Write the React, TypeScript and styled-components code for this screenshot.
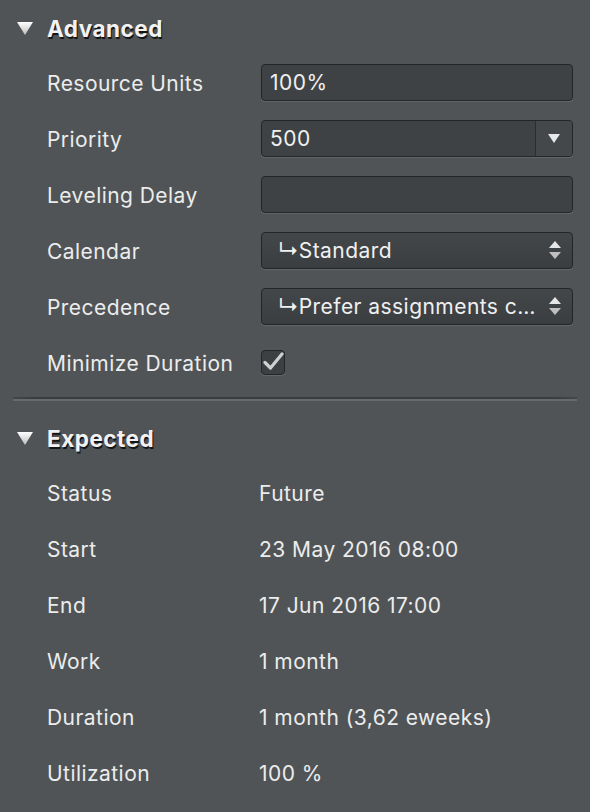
import React from "react";
import styled, { createGlobalStyle } from "styled-components";

const GlobalStyle = createGlobalStyle`
  html, body {
    margin: 0;
    padding: 0;
    background: #505456;
  }
  body {
    font-family: Inter, "Liberation Sans", sans-serif;
    color: #ececec;
  }
`;

const Panel = styled.div`
  width: 590px;
  min-height: 812px;
  background: #505456;
  padding-top: 2px;
  box-sizing: border-box;
`;

const SectionHeader = styled.div`
  height: 52px;
  display: flex;
  align-items: center;
  padding-left: 17px;
  gap: 14px;
`;

const Title = styled.span`
  font-size: 22.5px;
  font-weight: 700;
  color: #f2f2f2;
  text-shadow: 1px 2px 0 #141516;
  letter-spacing: 0.5px;
  margin-top: 1px;
`;

const Disclosure = () => (
  <svg width="16" height="13" viewBox="0 0 16 13">
    <defs>
      <linearGradient id="tri" x1="0" y1="0" x2="0" y2="1">
        <stop offset="0" stopColor="#ffffff" />
        <stop offset="1" stopColor="#bdbdbd" />
      </linearGradient>
    </defs>
    <polygon points="0,0 16,0 8,13" fill="url(#tri)" />
  </svg>
);

const Rows = styled.div`
  display: grid;
  grid-template-columns: 214px 312px;
  grid-auto-rows: 56px;
  padding-left: 47px;
  align-items: center;
`;

const BaseText = styled.div`
  font-size: 21px;
  letter-spacing: 0.45px;
  color: #ececec;
  padding-top: 3px;
`;

const Label = styled(BaseText)``;

const Value = styled(BaseText)`
  margin-left: -2px;
`;

const Field = styled.div`
  height: 37px;
  box-sizing: border-box;
  border: 1px solid #232527;
  border-radius: 4px;
  background: #3f4245;
  box-shadow: 0 1px 0 #62666a;
  display: flex;
  align-items: center;
  font-size: 21px;
  letter-spacing: 0.45px;
  color: #f0f0f0;
  overflow: hidden;
`;

const FieldText = styled.span<{ $indent?: number }>`
  flex: 1;
  padding-left: ${(p) => p.$indent ?? 8}px;
  padding-top: 1px;
  white-space: nowrap;
  overflow: hidden;
`;

const ComboButton = styled.div`
  width: 36px;
  height: 100%;
  border-left: 1px solid #2b2d2f;
  background: #45484b;
  display: flex;
  align-items: center;
  justify-content: center;
`;

const Popup = styled(Field)`
  background: linear-gradient(#44474a, #3b3e41);
`;

const Stepper = styled.div`
  width: 34px;
  display: flex;
  align-items: center;
  justify-content: center;
`;

const Check = styled.div`
  width: 24px;
  height: 25px;
  box-sizing: border-box;
  border: 1px solid #232527;
  border-radius: 4px;
  background: #3d4043;
  box-shadow: 0 1px 0 #62666a;
  display: flex;
  align-items: center;
  justify-content: center;
`;

const Divider = styled.div`
  margin: 7px 13px 13px;
  height: 2px;
  background: linear-gradient(
    to right,
    rgba(40, 42, 44, 0.3),
    #3a3d3f 4%,
    #3a3d3f 96%,
    rgba(40, 42, 44, 0.3)
  );
  box-shadow: 0 2px 0 #666a6d;
`;

const UpDown = () => (
  <svg width="12" height="18" viewBox="0 0 12 18">
    <polygon points="6,0 12,7 0,7" fill="#e6e6e6" />
    <polygon points="0,11 12,11 6,18" fill="#bfbfbf" />
  </svg>
);

const Hook = styled.span`
  letter-spacing: 0;
`;

const expected: [string, string][] = [
  ["Status", "Future"],
  ["Start", "23 May 2016 08:00"],
  ["End", "17 Jun 2016 17:00"],
  ["Work", "1 month"],
  ["Duration", "1 month (3,62 eweeks)"],
  ["Utilization", "100 %"],
];

export default function App() {
  return (
    <>
      <GlobalStyle />
      <Panel>
        <SectionHeader>
          <Disclosure />
          <Title>Advanced</Title>
        </SectionHeader>
        <Rows>
          <Label>Resource Units</Label>
          <Field>
            <FieldText>100%</FieldText>
          </Field>

          <Label>Priority</Label>
          <Field>
            <FieldText>500</FieldText>
            <ComboButton>
              <svg width="12" height="9" viewBox="0 0 12 9">
                <polygon points="0,0 12,0 6,9" fill="#e8e8e8" />
              </svg>
            </ComboButton>
          </Field>

          <Label>Leveling Delay</Label>
          <Field />

          <Label>Calendar</Label>
          <Popup>
            <FieldText $indent={16}>
              <Hook>↳</Hook>Standard
            </FieldText>
            <Stepper>
              <UpDown />
            </Stepper>
          </Popup>

          <Label>Precedence</Label>
          <Popup>
            <FieldText $indent={16}>
              <Hook>↳</Hook>Prefer assignments c…
            </FieldText>
            <Stepper>
              <UpDown />
            </Stepper>
          </Popup>

          <Label>Minimize Duration</Label>
          <div>
            <Check>
              <svg width="22" height="20" viewBox="0 0 22 20">
                <path
                  d="M3 10.5 L8.5 16 L20 2"
                  fill="none"
                  stroke="#cfcfcf"
                  strokeWidth="3.2"
                  strokeLinecap="round"
                  strokeLinejoin="round"
                />
              </svg>
            </Check>
          </div>
        </Rows>

        <Divider />

        <SectionHeader>
          <Disclosure />
          <Title>Expected</Title>
        </SectionHeader>
        <Rows>
          {expected.map(([k, v]) => (
            <React.Fragment key={k}>
              <Label>{k}</Label>
              <Value>{v}</Value>
            </React.Fragment>
          ))}
        </Rows>
      </Panel>
    </>
  );
}
